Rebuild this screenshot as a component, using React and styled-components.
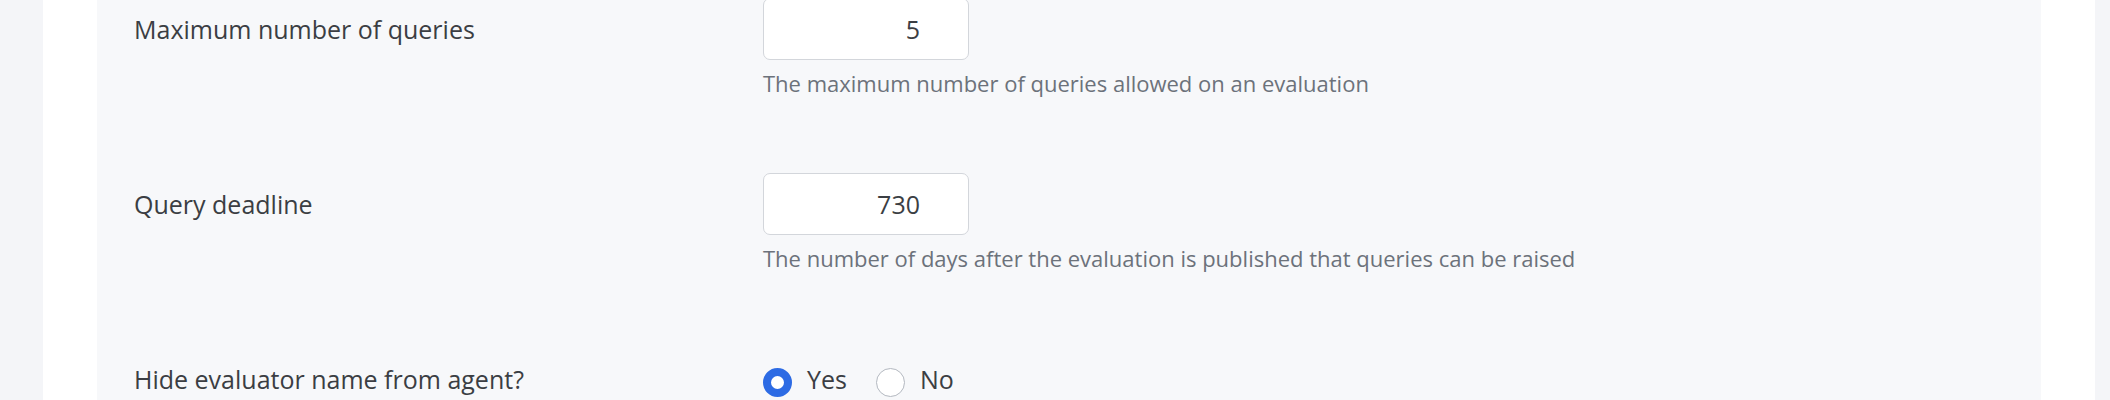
import React from "react";
import styled, { createGlobalStyle } from "styled-components";

const GlobalStyle = createGlobalStyle`
  html, body {
    margin: 0;
    padding: 0;
    height: 100%;
    overflow: hidden;
    background-color: #f4f5f8;
    font-family: "Open Sans", "Noto Sans", sans-serif;
  }
`;

const Page = styled.div`
  display: flex;
  height: 100vh;
  padding: 0 15px 0 43px;
`;

const Card = styled.main`
  flex: 1;
  display: flex;
  padding: 0 54px;
  background-color: #ffffff;
`;

const Panel = styled.section`
  flex: 1;
  display: flex;
  flex-direction: column;
  gap: 73.5px;
  margin-top: -2px;
  padding: 0 37px;
  background-color: #f7f8fa;
`;

const Row = styled.div`
  display: grid;
  grid-template-columns: 629px 1fr;
  align-items: start;
`;

const Label = styled.div`
  font-size: 25px;
  line-height: 62px;
  color: #3b3e43;
`;

const Field = styled.div`
  display: flex;
  flex-direction: column;
  align-items: flex-start;
`;

const NumberInput = styled.input`
  box-sizing: border-box;
  width: 206px;
  height: 62px;
  padding: 0 48px 0 16px;
  border: 1px solid #d3d6db;
  border-radius: 7px;
  background-color: #ffffff;
  font-family: inherit;
  font-size: 25px;
  color: #3b3e43;
  text-align: right;
  outline: none;
  appearance: textfield;

  &::-webkit-outer-spin-button,
  &::-webkit-inner-spin-button {
    -webkit-appearance: none;
    margin: 0;
  }
`;

const Help = styled.p`
  margin: 8px 0 0;
  font-size: 22px;
  line-height: 31.5px;
  color: #6c727b;
`;

const RadioGroup = styled.div`
  display: flex;
  align-items: center;
  height: 62px;
`;

const RadioOption = styled.label`
  display: flex;
  align-items: center;
  gap: 15px;
  margin-right: 29px;
  font-size: 25px;
  line-height: 62px;
  color: #3b3e43;
  cursor: pointer;
`;

const RadioDot = styled.span`
  box-sizing: border-box;
  width: 29px;
  height: 29px;
  margin-top: 7px;
  border-radius: 50%;
  border: ${({ checked }) => (checked ? "8.5px solid #2d6be4" : "1px solid #b3b8c0")};
  background-color: #ffffff;
`;

const settings = [
  {
    label: "Maximum number of queries",
    value: 5,
    help: "The maximum number of queries allowed on an evaluation",
  },
  {
    label: "Query deadline",
    value: 730,
    help: "The number of days after the evaluation is published that queries can be raised",
  },
];

export default function App() {
  return (
    <>
      <GlobalStyle />
      <Page>
        <Card>
          <Panel>
            {settings.map((s) => (
              <Row key={s.label}>
                <Label>{s.label}</Label>
                <Field>
                  <NumberInput type="number" defaultValue={s.value} />
                  <Help>{s.help}</Help>
                </Field>
              </Row>
            ))}
            <Row>
              <Label>Hide evaluator name from agent?</Label>
              <RadioGroup>
                <RadioOption>
                  <RadioDot checked />
                  Yes
                </RadioOption>
                <RadioOption>
                  <RadioDot />
                  No
                </RadioOption>
              </RadioGroup>
            </Row>
          </Panel>
        </Card>
      </Page>
    </>
  );
}
